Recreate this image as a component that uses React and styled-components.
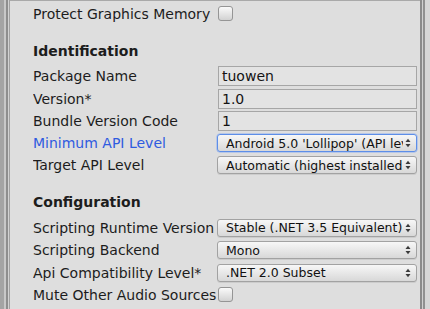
import React from "react";
import styled, { createGlobalStyle } from "styled-components";

const Global = createGlobalStyle`
  html, body { margin: 0; padding: 0; background: #dedede; }
  body { font-family: "DejaVu Sans", "Liberation Sans", sans-serif; }
  #root { width: 430px; height: 309px; overflow: hidden; }
`;

const Frame = styled.div`
  display: flex;
  width: 430px;
  height: 309px;
  background: #dedede;
`;

const LeftGutter = styled.div`
  width: 10px;
  flex: none;
  background: linear-gradient(
    to right,
    #a4a4a4 0px, #a4a4a4 4px,
    #c8c8c8 4px, #c8c8c8 6px,
    #8e8e8e 6px, #8e8e8e 8px,
    #d2d2d2 8px, #d2d2d2 9px,
    #a2a2a2 9px, #a2a2a2 10px
  );
`;

const RightGutter = styled.div`
  width: 10px;
  flex: none;
  background: linear-gradient(
    to right,
    #8a8a8a 0px, #8a8a8a 2px,
    #d0d0d0 2px, #d0d0d0 3px,
    #909090 3px, #909090 5px,
    #d6d6d6 5px, #d6d6d6 10px
  );
`;

const Content = styled.div`
  flex: 1;
  min-width: 0;
  display: flex;
  flex-direction: column;
  border-top: 1px solid #a9a9a9;
  padding: 1.5px 3px 0 23px;
  color: #1c1c1c;
  font-size: 14px;
`;

const Row = styled.div`
  display: grid;
  grid-template-columns: 184px minmax(0, 1fr);
  align-items: center;
  height: 22.3px;
  flex: none;
`;

const Label = styled.div`
  white-space: nowrap;
  overflow: hidden;
  color: ${(p) => (p.$accent ? "#2f5be0" : "#1c1c1c")};
  line-height: 16px;
`;

const Header = styled.div`
  height: 22.3px;
  flex: none;
  display: flex;
  align-items: center;
  font-weight: bold;
  margin: 14.7px 0 3.3px;
`;

const TextField = styled.div`
  height: 20px;
  box-sizing: border-box;
  margin-left: 1px;
  border: 1px solid #a6a6a6;
  background: #e3e3e3;
  padding: 0 3px;
  display: flex;
  align-items: center;
  white-space: nowrap;
  overflow: hidden;
  color: #141414;
`;

const Popup = styled.div`
  min-width: 0;
  height: 18px;
  box-sizing: border-box;
  border: 1px solid ${(p) => (p.$focused ? "#5d8ee8" : "#a2a2a2")};
  box-shadow: ${(p) => (p.$focused ? "0 0 0 0.5px #8fb0f0" : "0 1px 0 rgba(0,0,0,0.08)")};
  border-radius: 3px;
  background: linear-gradient(to bottom, #f7f7f7 0%, #e6e6e6 55%, #d8d8d8 100%);
  display: flex;
  align-items: center;
  padding: 0 5px 0 8px;
  gap: 2px;
  font-size: 12.5px;
  color: #111;
`;

const PopupText = styled.span`
  flex: 1;
  min-width: 0;
  overflow: hidden;
  white-space: nowrap;
`;

const Arrows = styled.svg`
  flex: none;
  width: 6px;
  height: 10px;
`;

const Check = styled.div`
  width: 15px;
  height: 15px;
  box-sizing: border-box;
  margin-left: 1px;
  border: 1px solid #959595;
  border-radius: 3px;
  background: linear-gradient(to bottom, #fafafa 0%, #e2e2e2 60%, #d2d2d2 100%);
`;

const PopupArrows = () => (
  <Arrows viewBox="0 0 6 10">
    <path d="M0.5 4 L3 0.8 L5.5 4 Z" fill="#3a3a3a" />
    <path d="M0.5 6 L3 9.2 L5.5 6 Z" fill="#3a3a3a" />
  </Arrows>
);

const Field = ({ label, accent, children }) => (
  <Row>
    <Label $accent={accent}>{label}</Label>
    {children}
  </Row>
);

const Dropdown = ({ value, focused }) => (
  <Popup $focused={focused}>
    <PopupText>{value}</PopupText>
    <PopupArrows />
  </Popup>
);

export default function App() {
  return (
    <>
      <Global />
      <Frame>
        <LeftGutter />
        <Content>
          <Field label="Protect Graphics Memory">
            <Check />
          </Field>

          <Header>Identification</Header>
          <Field label="Package Name">
            <TextField>tuowen</TextField>
          </Field>
          <Field label="Version*">
            <TextField>1.0</TextField>
          </Field>
          <Field label="Bundle Version Code">
            <TextField>1</TextField>
          </Field>
          <Field label="Minimum API Level" accent>
            <Dropdown focused value="Android 5.0 'Lollipop' (API level 21)" />
          </Field>
          <Field label="Target API Level">
            <Dropdown value="Automatic (highest installed)" />
          </Field>

          <Header>Configuration</Header>
          <Field label="Scripting Runtime Version">
            <Dropdown value="Stable (.NET 3.5 Equivalent)" />
          </Field>
          <Field label="Scripting Backend">
            <Dropdown value="Mono" />
          </Field>
          <Field label="Api Compatibility Level*">
            <Dropdown value=".NET 2.0 Subset" />
          </Field>
          <Field label="Mute Other Audio Sources">
            <Check />
          </Field>
        </Content>
        <RightGutter />
      </Frame>
    </>
  );
}
